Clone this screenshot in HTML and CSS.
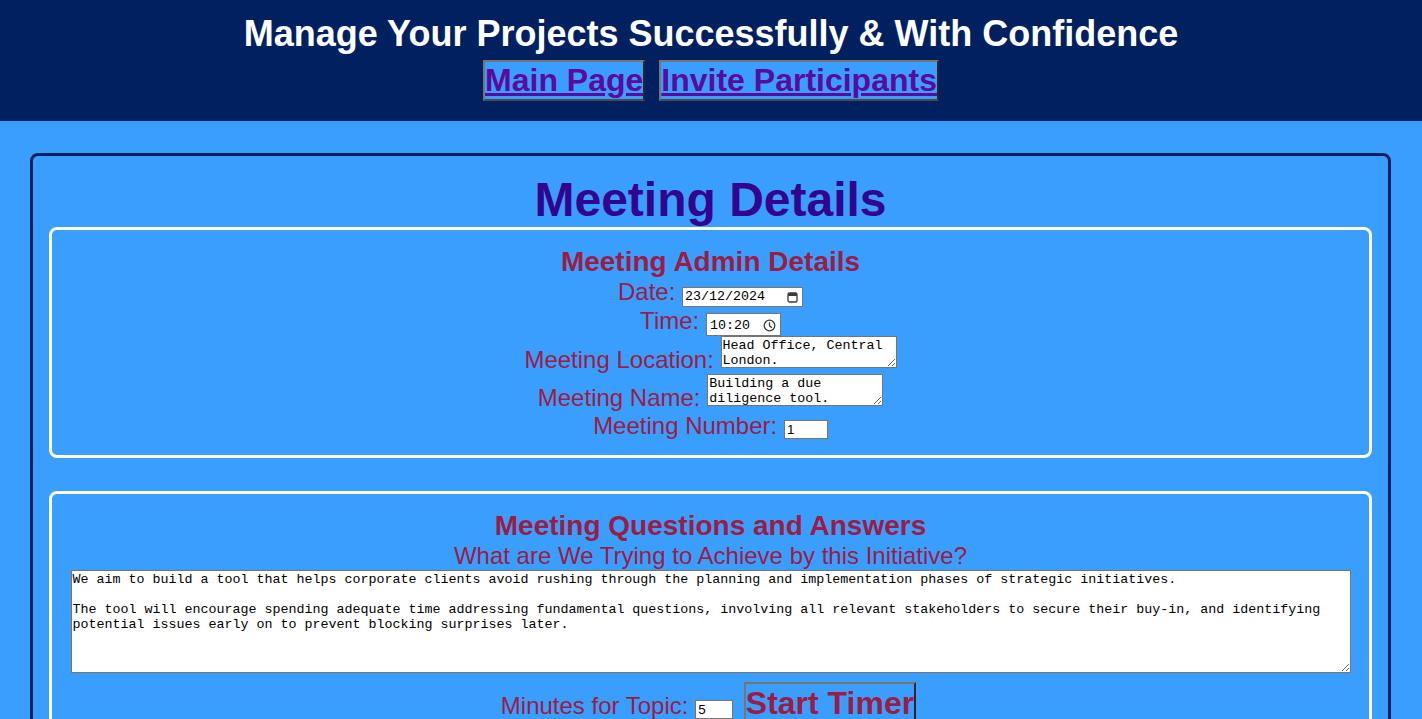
FILE: index.html
```html
<!DOCTYPE html>
<html lang="en">
<head>
<meta charset="utf-8">
<title>Meeting Details</title>
<link rel="stylesheet" href="styles.css">
</head>
<body>
<header class="site-header">
  <h1 class="site-title">Manage Your Projects Successfully &amp; With Confidence</h1>
  <nav class="site-nav">
    <a class="nav-btn" href="#">Main Page</a>
    <a class="nav-btn" href="#">Invite Participants</a>
  </nav>
</header>
<main class="panel">
  <h1 class="panel-title">Meeting Details</h1>
  <section class="card">
    <h2 class="card-title">Meeting Admin Details</h2>
    <div class="row"><label>Date:</label> <span class="fake-input date-input"><span>23/12/2024</span><svg class="picker" width="11" height="12" viewBox="0 0 11 12"><rect x="1" y="2" width="9" height="9" rx="1.6" fill="none" stroke="#3a3a3a" stroke-width="1.3"/><rect x="1" y="2" width="9" height="3" rx="1" fill="#3a3a3a"/></svg></span></div>
    <div class="row"><label>Time:</label> <span class="fake-input time-input"><span>10:20</span><svg class="picker" width="13" height="13" viewBox="0 0 13 13"><circle cx="6.5" cy="6.5" r="5.3" fill="none" stroke="#3a3a3a" stroke-width="1.3"/><path d="M6.5 3.2V6.6L8.8 8.8" fill="none" stroke="#3a3a3a" stroke-width="1.3"/></svg></span></div>
    <div class="row"><label>Meeting Location:</label> <textarea class="small-ta">Head Office, Central London.</textarea></div>
    <div class="row"><label>Meeting Name:</label> <textarea class="small-ta">Building a due diligence tool.</textarea></div>
    <div class="row"><label>Meeting Number:</label> <input class="num-input meeting-num" type="text" value="1"></div>
  </section>
  <section class="card">
    <h2 class="card-title">Meeting Questions and Answers</h2>
    <h3 class="question">What are We Trying to Achieve by this Initiative?</h3>
    <div class="row"><textarea class="answer">We aim to build a tool that helps corporate clients avoid rushing through the planning and implementation phases of strategic initiatives.

The tool will encourage spending adequate time addressing fundamental questions, involving all relevant stakeholders to secure their buy-in, and identifying potential issues early on to prevent blocking surprises later.</textarea></div>
    <div class="row"><label>Minutes for Topic:</label> <input class="num-input minutes" type="text" value="5"> <button class="timer-btn" type="button">Start Timer</button></div>
  </section>
</main>
</body>
</html>
```
FILE: styles.css
```css
body {
  margin: 0;
  background: #3a9eff;
  font-family: "Liberation Sans", Arial, sans-serif;
}

.site-header {
  background: #002060;
  padding: 13px 0 20px;
  text-align: center;
}

.site-title {
  margin: 0 0 5px;
  font-size: 36px;
  font-weight: bold;
  line-height: normal;
  color: #ffffff;
}

.site-nav {
  display: flex;
  justify-content: center;
  gap: 14px;
}

.nav-btn {
  display: inline-block;
  font-size: 32px;
  font-weight: bold;
  line-height: normal;
  color: #5a0a9c;
  background: #3a9eff;
  text-decoration: underline;
  border: 2px solid;
  border-color: #767676 #262626 #4a4a4a #767676;
}

.panel {
  margin: 32px 31px 0 30px;
  border: 3px solid #002060;
  border-radius: 8px;
  padding: 16px;
  min-height: 700px;
}

.panel-title {
  margin: 0;
  font-size: 48px;
  font-weight: bold;
  line-height: normal;
  text-align: center;
  color: #33058f;
}

.card {
  border: 3px solid #ffffff;
  border-radius: 8px;
  padding: 16px 15px 15px;
  margin-bottom: 33px;
  text-align: center;
  color: #9d1c44;
}

.card-title {
  margin: 0;
  font-size: 28px;
  font-weight: bold;
  line-height: normal;
}

.question {
  margin: 0;
  font-size: 24px;
  font-weight: normal;
  line-height: normal;
}

.row {
  font-size: 24px;
  line-height: normal;
}

.fake-input {
  display: inline-flex;
  align-items: center;
  justify-content: space-between;
  box-sizing: border-box;
  vertical-align: baseline;
  background: #ffffff;
  border: 1px solid #767676;
  font-family: "Liberation Mono", "Courier New", monospace;
  font-size: 13.333px;
  line-height: 15px;
  color: #000000;
}

.date-input {
  width: 121px;
  height: 20px;
  padding: 0 4px 0 2px;
}

.time-input {
  width: 75px;
  height: 23px;
  padding: 1px 4px 0 3px;
}

.picker {
  display: block;
}

textarea {
  box-sizing: border-box;
  margin: 0;
  padding: 1px;
  border: 1px solid #767676;
  background: #ffffff;
  color: #000000;
  font-family: "Liberation Mono", "Courier New", monospace;
  font-size: 13.333px;
  line-height: 15px;
  overflow: hidden;
  vertical-align: baseline;
}

.small-ta {
  width: 176px;
  height: 32px;
}

.answer {
  width: 1280px;
  height: 103px;
}

.num-input {
  box-sizing: border-box;
  margin: 0;
  padding: 1px 2px;
  border: 1px solid #767676;
  background: #ffffff;
  color: #000000;
  font-family: "Liberation Sans", Arial, sans-serif;
  font-size: 13.333px;
  vertical-align: baseline;
}

.meeting-num {
  width: 44px;
  height: 19px;
}

.minutes {
  width: 38px;
  height: 19px;
}

.timer-btn {
  margin: 3px 4px 0 4px;
  padding: 1px 0;
  font-family: "Liberation Sans", Arial, sans-serif;
  font-size: 32px;
  font-weight: bold;
  line-height: normal;
  color: #9d1c44;
  background: #3a9eff;
  border: 2px solid;
  border-color: #767676 #262626 #4a4a4a #767676;
  vertical-align: baseline;
}
```
